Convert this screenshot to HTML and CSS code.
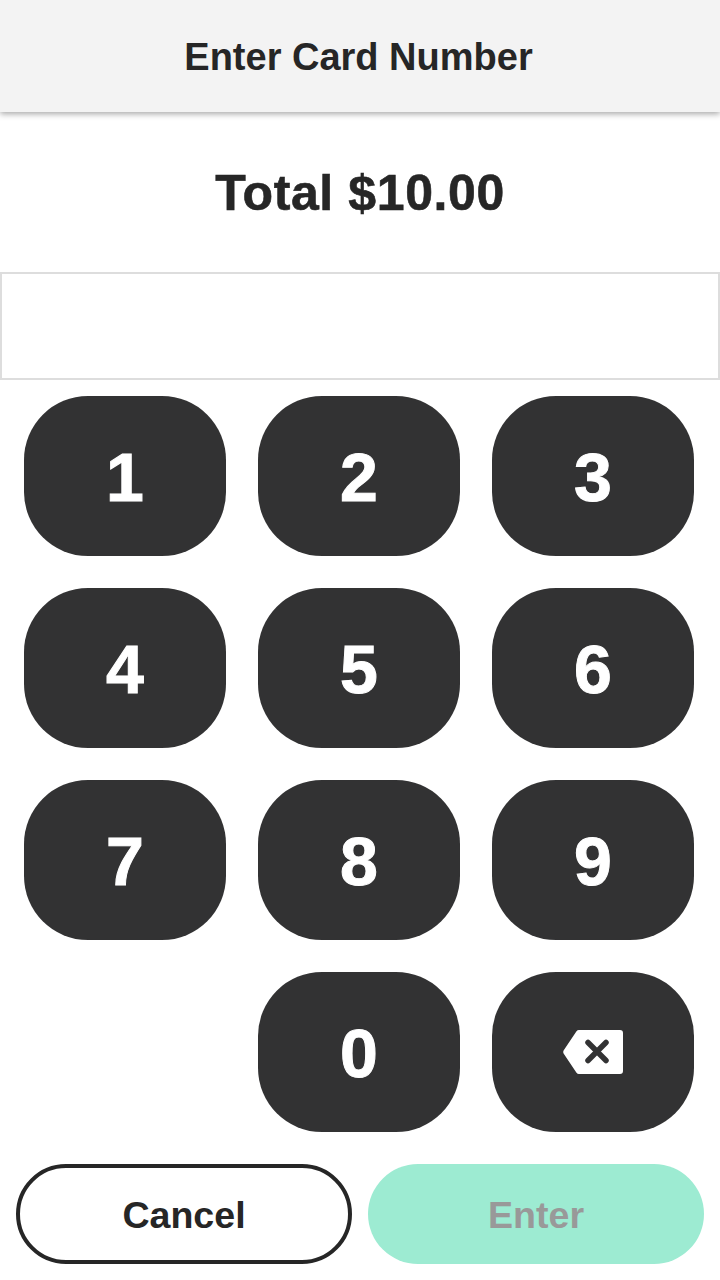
FILE: index.html
```html
<!DOCTYPE html>
<html lang="en">
<head>
  <meta charset="UTF-8">
  <title>Enter Card Number</title>
  <link rel="stylesheet" href="styles.css">
</head>
<body>
<main class="main">
  <header class="header">Enter Card Number</header>
  <div class="total">Total $10.00</div>
  <div class="card-input"></div>
  <div class="keypad">
    <button class="key">1</button>
    <button class="key">2</button>
    <button class="key">3</button>
    <button class="key">4</button>
    <button class="key">5</button>
    <button class="key">6</button>
    <button class="key">7</button>
    <button class="key">8</button>
    <button class="key">9</button>
    <button class="key key-zero">0</button>
    <button class="key key-back">
      <svg viewBox="0 0 60 44" width="60" height="44">
        <path fill="#fff" d="M16 0H57a3 3 0 0 1 3 3V41a3 3 0 0 1-3 3H16a3 3 0 0 1-2.500-1.300L.6 23.400a3 3 0 0 1 0-2.800L13.500 1.300A3 3 0 0 1 16 0z"/>
        <path stroke="#323233" stroke-width="5.500" stroke-linecap="round" fill="none" d="M25 12.500 43 30.500M43 12.500 25 30.500"/>
      </svg>
    </button>
  </div>
  <div class="actions">
    <button class="action cancel">Cancel</button>
    <button class="action enter">Enter</button>
  </div>
</main>
</body>
</html>
```

FILE: styles.css
```css
* {
  margin: 0;
  padding: 0;
  box-sizing: border-box;
}

body {
  background: #fff;
  font-family: "Liberation Sans", Arial, sans-serif;
  color: #262626;
}

.main {
  width: 720px;
  height: 1280px;
  display: flex;
  flex-direction: column;
  overflow: hidden;
}

.header {
  height: 112px;
  display: flex;
  justify-content: center;
  align-items: center;
  padding: 2px 3px 0 0;
  background: #f3f3f3;
  box-shadow: 0 2px 6px rgba(0, 0, 0, 0.35);
  font-size: 38px;
  font-weight: bold;
}

.total {
  height: 160px;
  display: flex;
  justify-content: center;
  align-items: center;
  padding-top: 2px;
  font-size: 50px;
  font-weight: bold;
  letter-spacing: 0.6px;
  -webkit-text-stroke: 0.6px #262626;
}

.card-input {
  height: 108px;
  border: 2px solid #ddd;
}

.keypad {
  display: grid;
  grid-template-columns: repeat(3, 202px);
  grid-auto-rows: 160px;
  gap: 32px;
  padding: 16px 0 32px 24px;
}

.key {
  display: flex;
  justify-content: center;
  align-items: center;
  padding-top: 2px;
  border: none;
  border-radius: 64px;
  background: #323233;
  color: #fff;
  font-family: inherit;
  font-size: 68px;
  font-weight: bold;
  -webkit-text-stroke: 1px #fff;
}

.key-zero {
  grid-column: 2;
}

.key-back {
  padding-top: 0;
}

.actions {
  display: grid;
  grid-template-columns: 1fr 1fr;
  gap: 16px;
  padding: 0 16px;
}

.action {
  height: 100px;
  padding-top: 2px;
  border-radius: 50px;
  font-family: inherit;
  font-size: 37.6px;
  font-weight: bold;
}

.cancel {
  background: #fff;
  border: 4px solid #262626;
  color: #262626;
}

.enter {
  background: #9debd2;
  border: none;
  color: #999;
}
```
